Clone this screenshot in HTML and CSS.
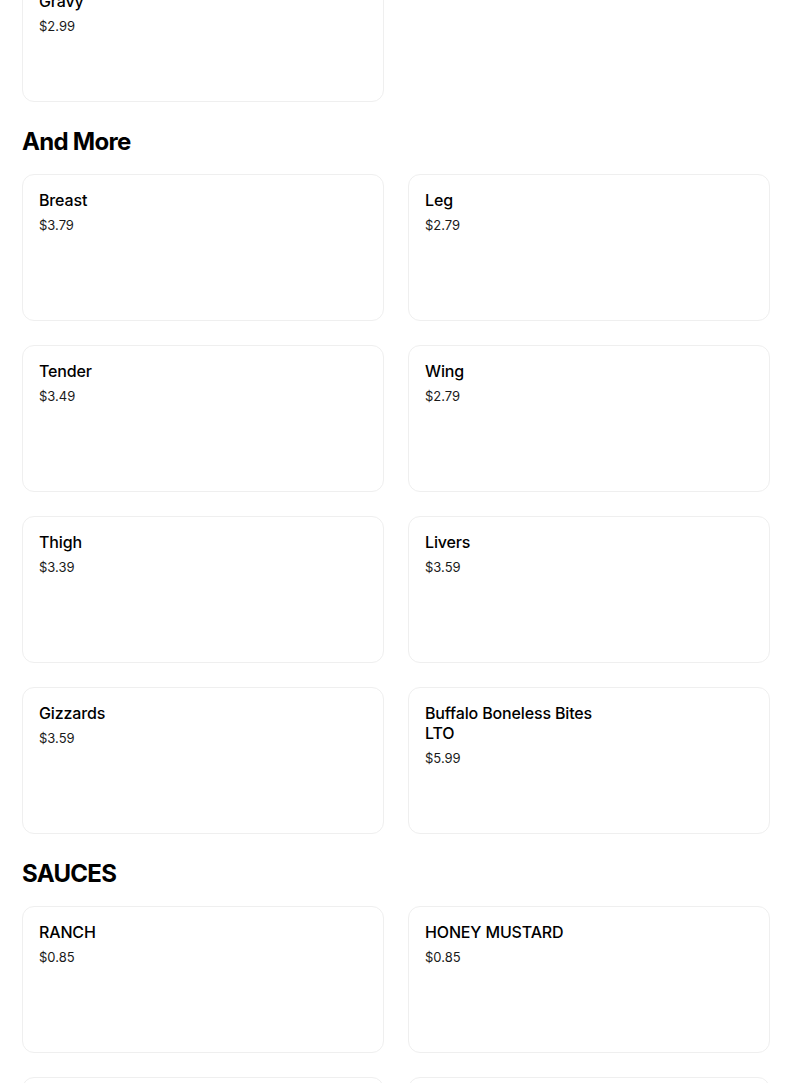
FILE: index.html
```html
<!DOCTYPE html>
<html lang="en">
<head>
<meta charset="utf-8">
<title>Menu</title>
<link rel="stylesheet" href="styles.css">
</head>
<body>
<main class="menu">
  <section class="section section-first">
    <div class="grid">
      <div class="card"><div class="info"><div class="title">Mashed Potatoes and Gravy</div><div class="price">$2.99</div></div></div>
    </div>
  </section>
  <section class="section">
    <h2 class="heading">And More</h2>
    <div class="grid">
      <div class="card"><div class="info"><div class="title">Breast</div><div class="price">$3.79</div></div></div>
      <div class="card"><div class="info"><div class="title">Leg</div><div class="price">$2.79</div></div></div>
      <div class="card"><div class="info"><div class="title">Tender</div><div class="price">$3.49</div></div></div>
      <div class="card"><div class="info"><div class="title">Wing</div><div class="price">$2.79</div></div></div>
      <div class="card"><div class="info"><div class="title">Thigh</div><div class="price">$3.39</div></div></div>
      <div class="card"><div class="info"><div class="title">Livers</div><div class="price">$3.59</div></div></div>
      <div class="card"><div class="info"><div class="title">Gizzards</div><div class="price">$3.59</div></div></div>
      <div class="card"><div class="info"><div class="title">Buffalo Boneless Bites LTO</div><div class="price">$5.99</div></div></div>
    </div>
  </section>
  <section class="section">
    <h2 class="heading">SAUCES</h2>
    <div class="grid">
      <div class="card"><div class="info"><div class="title">RANCH</div><div class="price">$0.85</div></div></div>
      <div class="card"><div class="info"><div class="title">HONEY MUSTARD</div><div class="price">$0.85</div></div></div>
      <div class="card"><div class="info"><div class="title">BBQ</div><div class="price">$0.85</div></div></div>
      <div class="card"><div class="info"><div class="title">HOT SAUCE</div><div class="price">$0.85</div></div></div>
    </div>
  </section>
</main>
</body>
</html>
```
FILE: styles.css
```css
html, body {
  margin: 0;
  padding: 0;
  background: #ffffff;
  overflow: hidden;
}

body {
  font-family: Inter, "Liberation Sans", Arial, sans-serif;
  color: #000000;
}

.menu {
  margin-top: -45px;
  padding: 0 34px 0 22px;
}

.section {
  margin-top: 24px;
}

.section-first {
  margin-top: 0;
}

.heading {
  margin: 0 0 16px 0;
  font-size: 24px;
  line-height: 32px;
  font-weight: 700;
  letter-spacing: -0.7px;
  color: #000000;
}

.grid {
  display: grid;
  grid-template-columns: 1fr 1fr;
  gap: 24px;
}

.card {
  box-sizing: border-box;
  height: 147px;
  border: 1px solid #efefef;
  border-radius: 12px;
  padding: 15px 16px;
  background: #ffffff;
}

.info {
  max-width: 190px;
}

.title {
  font-size: 16px;
  line-height: 20px;
  font-weight: 500;
  letter-spacing: -0.15px;
  color: #000000;
}

.price {
  margin-top: 5px;
  font-size: 13px;
  line-height: 20px;
  font-weight: 400;
  color: #1a1a1a;
}
```
